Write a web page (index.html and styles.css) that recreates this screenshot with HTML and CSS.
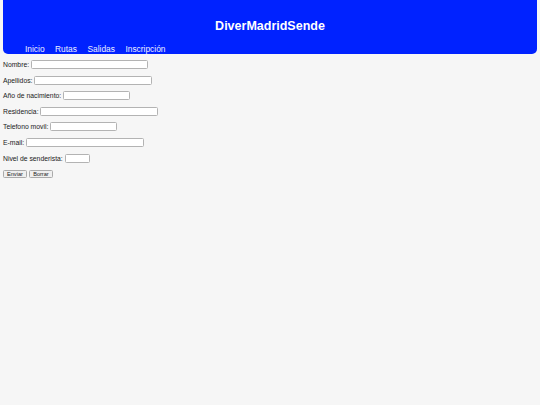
FILE: index.html
```html
<!DOCTYPE html>
<html lang="es">
<head>
<meta charset="utf-8">
<title>DiverMadridSende</title>
<link rel="stylesheet" href="styles.css">
</head>
<body>
<header class="site-header">
  <h1 class="site-title">DiverMadridSende</h1>
  <nav class="site-nav">
    <a href="#">Inicio</a>
    <a href="#">Rutas</a>
    <a href="#">Salidas</a>
    <a href="#">Inscripción</a>
  </nav>
</header>
<form class="signup">
  <div class="row"><label>Nombre: <input type="text" class="w-long"></label></div>
  <div class="row"><label>Apellidos: <input type="text" class="w-long"></label></div>
  <div class="row"><label>Año de nacimiento: <input type="text" class="w-med"></label></div>
  <div class="row"><label>Residencia: <input type="text" class="w-long"></label></div>
  <div class="row"><label>Telefono movil: <input type="text" class="w-med"></label></div>
  <div class="row"><label>E-mail: <input type="text" class="w-long"></label></div>
  <div class="row"><label>Nivel de senderista: <input type="text" class="w-short"></label></div>
  <div class="row buttons">
    <button type="submit" class="btn">Enviar</button>
    <button type="reset" class="btn">Borrar</button>
  </div>
</form>
</body>
</html>
```
FILE: styles.css
```css
html, body {
  margin: 0;
  padding: 0;
  background: #f6f6f6;
}
body {
  padding: 0 3px;
  font-family: "Liberation Sans", Arial, sans-serif;
  color: #1a1a1a;
}
.site-header {
  background: #0022ff;
  height: 53.5px;
  border-radius: 0 0 5px 5px;
  display: flex;
  flex-direction: column;
  box-sizing: border-box;
  padding-top: 19px;
}
.site-title {
  margin: 0;
  color: #ffffff;
  font-size: 12.5px;
  line-height: 15px;
  font-weight: bold;
  text-align: center;
}
.site-nav {
  margin-top: 9.5px;
  padding-left: 22px;
  display: flex;
  gap: 10.5px;
  line-height: 10px;
}
.site-nav a {
  color: #eef0ff;
  text-decoration: none;
  font-size: 8.4px;
}
.signup {
  display: flex;
  flex-direction: column;
  gap: 6.6px;
  padding-top: 6.5px;
}
.row {
  height: 9px;
  display: flex;
  align-items: center;
  font-size: 6.8px;
  line-height: 9px;
}
.row label {
  display: flex;
  align-items: center;
  white-space: pre;
}
.row input {
  box-sizing: border-box;
  height: 9px;
  padding: 0;
  margin: 0;
  border: 1px solid #b3b3b3;
  border-radius: 1.5px;
  background: #ffffff;
  font-size: 6px;
}
.w-long { width: 117.5px; }
.w-med { width: 66.5px; }
.w-short { width: 25.5px; }
.buttons {
  gap: 2.3px;
  margin-top: 0.5px;
}
.btn {
  box-sizing: border-box;
  height: 8.5px;
  padding: 0 3px;
  margin: 0;
  border: 1px solid #aaaaaa;
  border-radius: 1.5px;
  background: #efefef;
  font-family: "Liberation Sans", Arial, sans-serif;
  font-size: 5.6px;
  line-height: 6.5px;
  color: #222;
}
```
